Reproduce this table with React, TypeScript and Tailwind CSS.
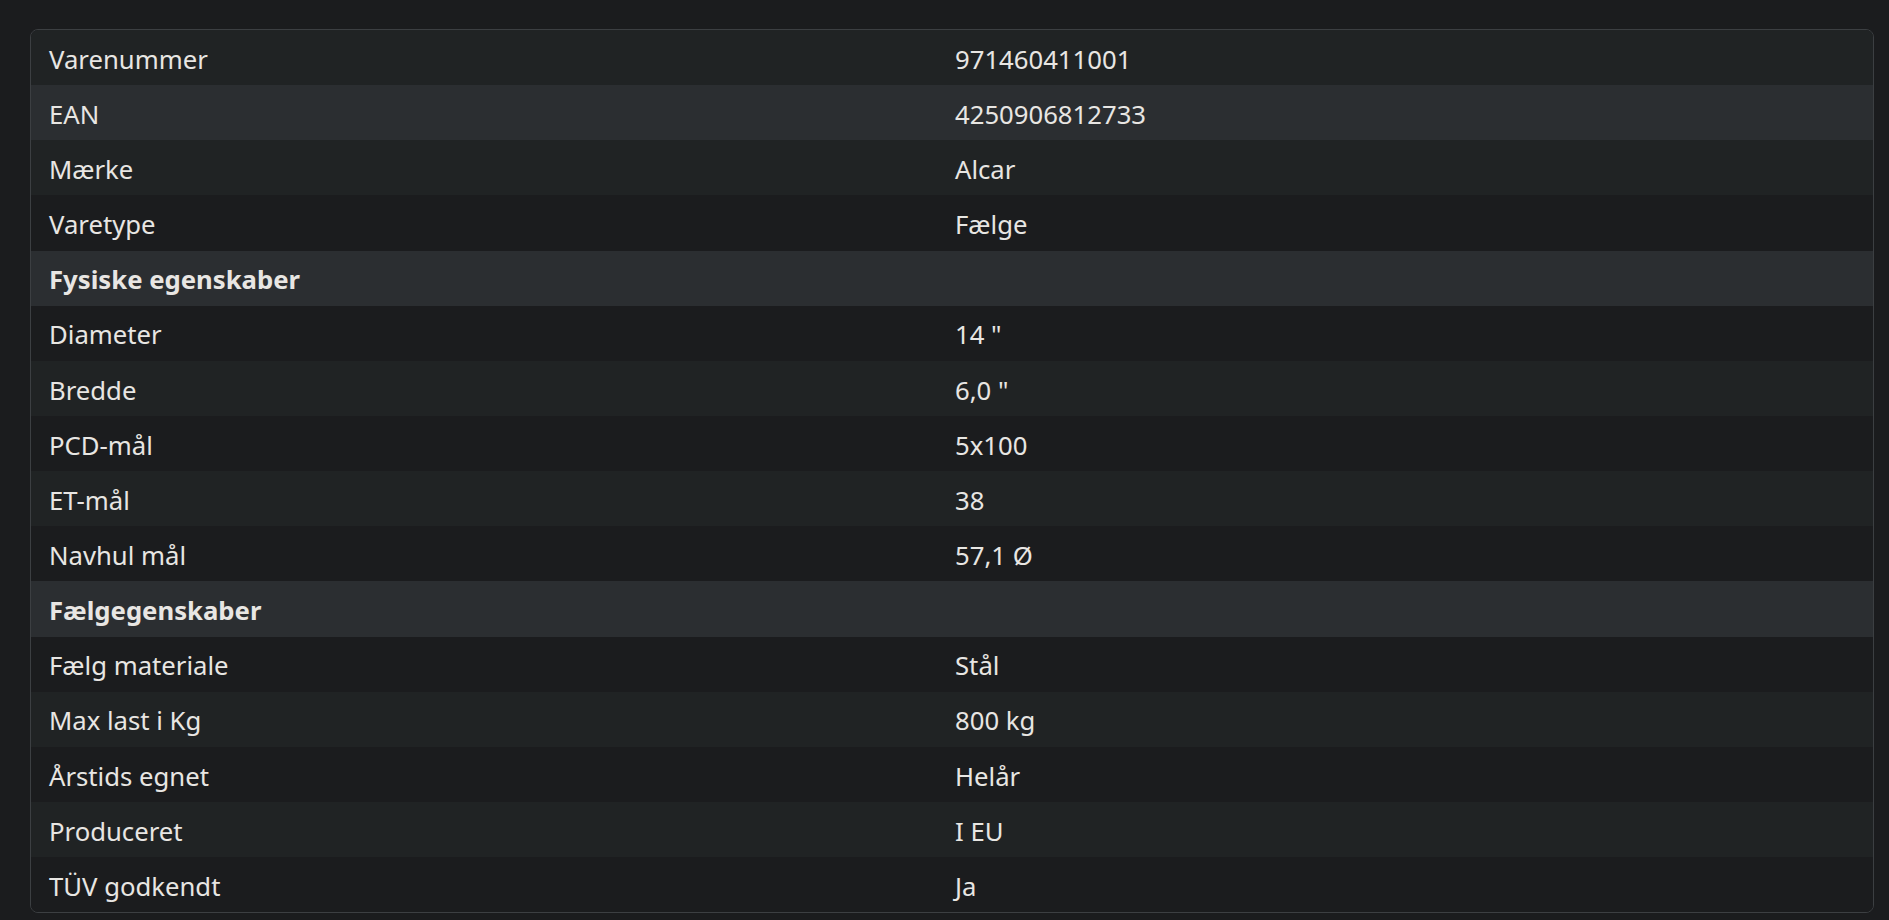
import React from 'react';

type Row = { label: string; value?: string; section?: boolean; tone: 'a' | 'b' | 'c' };

const ROWS: Row[] = [
  { label: 'Varenummer', value: '971460411001', tone: 'a' },
  { label: 'EAN', value: '4250906812733', tone: 'c' },
  { label: 'Mærke', value: 'Alcar', tone: 'a' },
  { label: 'Varetype', value: 'Fælge', tone: 'b' },
  { label: 'Fysiske egenskaber', section: true, tone: 'c' },
  { label: 'Diameter', value: '14 "', tone: 'b' },
  { label: 'Bredde', value: '6,0 "', tone: 'a' },
  { label: 'PCD-mål', value: '5x100', tone: 'b' },
  { label: 'ET-mål', value: '38', tone: 'a' },
  { label: 'Navhul mål', value: '57,1 Ø', tone: 'b' },
  { label: 'Fælgegenskaber', section: true, tone: 'c' },
  { label: 'Fælg materiale', value: 'Stål', tone: 'b' },
  { label: 'Max last i Kg', value: '800 kg', tone: 'a' },
  { label: 'Årstids egnet', value: 'Helår', tone: 'b' },
  { label: 'Produceret', value: 'I EU', tone: 'a' },
  { label: 'TÜV godkendt', value: 'Ja', tone: 'b' },
];

const toneClass = {
  a: 'bg-[#202324]',
  b: 'bg-[#1b1c1e]',
  c: 'bg-[#2b2e31]',
};

export default function App() {
  return (
    <div className="min-h-[920px] w-full bg-[#1b1c1e] pt-[29px] pl-[30px] text-[#e8e6e3] font-['Noto_Sans',_'Open_Sans',_sans-serif]">
      <div className="w-[1844px] overflow-hidden rounded-[8px] border border-[#3c3f42]">
        {ROWS.map((row) => (
          <div
            key={row.label}
            className={`grid h-[55.15px] grid-cols-[924px_1fr] items-center pt-[4px] text-[25.7px] leading-none ${toneClass[row.tone]}`}
          >
            <div className={`pl-[18px] ${row.section ? 'font-bold' : ''}`}>{row.label}</div>
            <div>{row.value}</div>
          </div>
        ))}
      </div>
    </div>
  );
}
